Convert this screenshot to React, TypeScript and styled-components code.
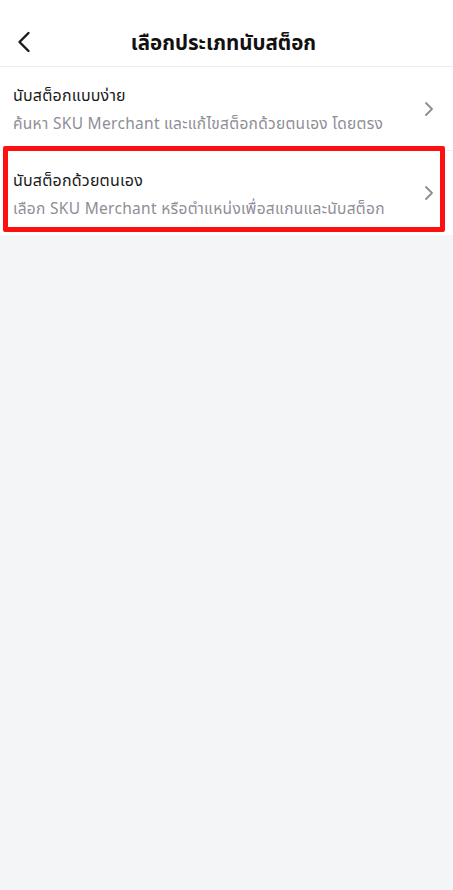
import styled, { createGlobalStyle } from "styled-components"

// **********
// data
// **********

const options = [
	{
		title: "นับสต็อกแบบง่าย",
		description: "ค้นหา SKU Merchant และแก้ไขสต็อกด้วยตนเอง โดยตรง",
		highlighted: false,
	},
	{
		title: "นับสต็อกด้วยตนเอง",
		description: "เลือก SKU Merchant หรือตำแหน่งเพื่อสแกนและนับสต็อก",
		highlighted: true,
	},
]

// **********
// component
// **********

export default function App() {
	return (
		<>
			<GlobalStyle />
			<Page>
				<Header>
					<BackButton aria-label="back">
						<svg width="14" height="22" viewBox="0 0 14 22" fill="none">
							<path
								d="M11.5 2 L2.5 11 L11.5 20"
								stroke="#1a1a1a"
								strokeWidth="2.4"
								strokeLinecap="round"
								strokeLinejoin="round"
							/>
						</svg>
					</BackButton>
					<Title>เลือกประเภทนับสต็อก</Title>
				</Header>
				<List>
					{options.map((o) => (
						<Row key={o.title}>
							<Text>
								<RowTitle>{o.title}</RowTitle>
								<RowDescription>{o.description}</RowDescription>
							</Text>
							<svg width="10" height="16" viewBox="0 0 10 16" fill="none">
								<path
									d="M2 2 L8 8 L2 14"
									stroke="#8c8c94"
									strokeWidth="1.8"
									strokeLinecap="round"
									strokeLinejoin="round"
								/>
							</svg>
							{o.highlighted && <Highlight />}
						</Row>
					))}
				</List>
			</Page>
		</>
	)
}

// **********
// styles
// **********

const GlobalStyle = createGlobalStyle`
	html, body {
		margin: 0;
		padding: 0;
		background: #f4f5f7;
	}
	body {
		font-family: "Noto Sans", "Noto Sans Thai", "Liberation Sans", sans-serif;
	}
`
const Page = styled.div`
	min-height: 890px;
	background: #f4f5f7;
`
const Header = styled.header`
	position: relative;
	display: flex;
	align-items: center;
	justify-content: center;
	height: 67px;
	padding-top: 20px;
	box-sizing: border-box;
	background: #fff;
	border-bottom: 1px solid #ececee;
`
const BackButton = styled.button`
	position: absolute;
	left: 17px;
	top: 31px;
	display: flex;
	padding: 0;
	border: 0;
	background: none;
`
const Title = styled.h1`
	margin: 0 0 0 -6px;
	font-size: 20.5px;
	font-weight: 700;
	color: #111;
`
const List = styled.div`
	display: flex;
	flex-direction: column;
	background: #fff;
`
const Row = styled.div`
	position: relative;
	display: flex;
	align-items: center;
	justify-content: space-between;
	height: 83px;
	padding: 0 19px 0 13px;
	border-bottom: 1px solid #efeff1;
	&:last-child {
		border-bottom: 0;
		height: 84px;
	}
`
const Text = styled.div`
	display: flex;
	flex-direction: column;
	gap: 7px;
`
const RowTitle = styled.div`
	font-size: 16px;
	color: #1a1a1a;
	line-height: 22px;
	letter-spacing: 0.2px;
`
const RowDescription = styled.div`
	font-size: 15.5px;
	color: #8e8e96;
	line-height: 20px;
	letter-spacing: 0.3px;
`
const Highlight = styled.span`
	position: absolute;
	left: 3px;
	right: 8px;
	top: -5px;
	bottom: 3px;
	border: 5px solid #ff1010;
	border-radius: 2px;
	pointer-events: none;
`
